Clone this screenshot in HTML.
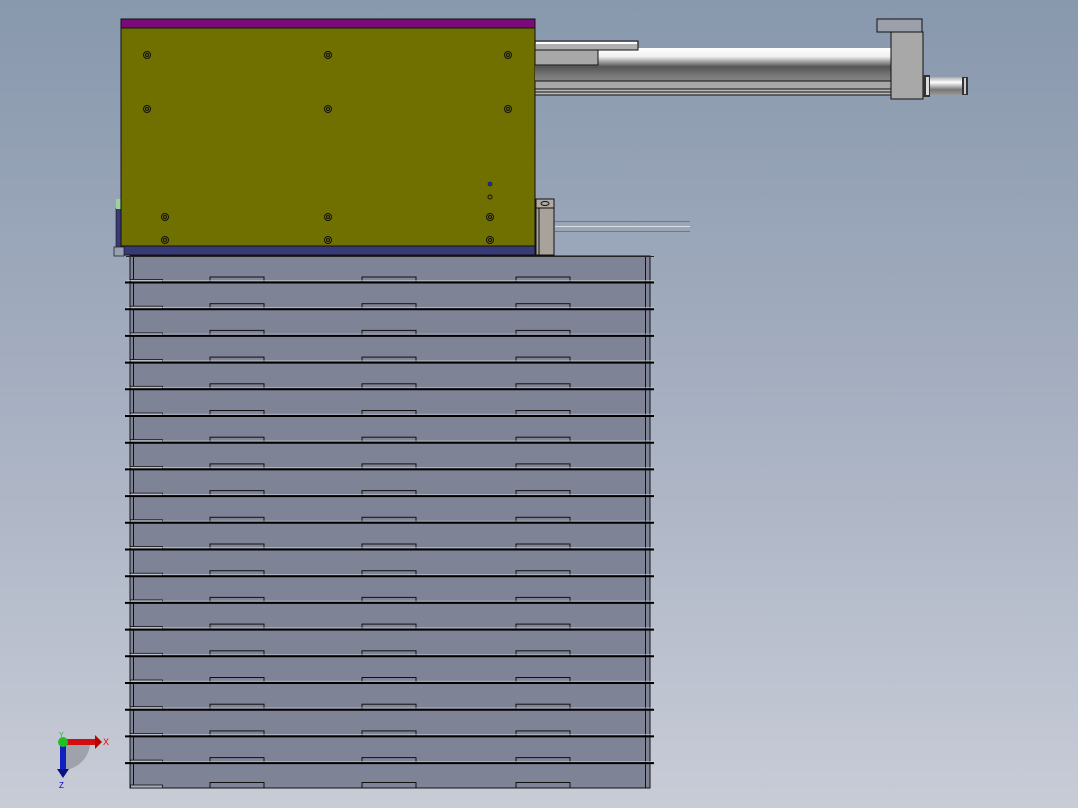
<!DOCTYPE html>
<html><head><meta charset="utf-8"><style>
html,body{margin:0;padding:0;width:1078px;height:808px;overflow:hidden}
body{background:linear-gradient(#8898ad 0%,#a3adbf 45%,#c8ccd7 100%)}
svg{position:absolute;left:0;top:0}
</style></head><body>
<svg width="1078" height="808" viewBox="0 0 1078 808">
<defs>
<linearGradient id="cyl" x1="0" y1="0" x2="0" y2="1">
<stop offset="0" stop-color="#fff"/><stop offset="0.25" stop-color="#f0f0f0"/><stop offset="0.55" stop-color="#555"/><stop offset="0.8" stop-color="#777"/><stop offset="1" stop-color="#888"/></linearGradient>
<linearGradient id="rod" x1="0" y1="0" x2="0" y2="1">
<stop offset="0" stop-color="#aaa"/><stop offset="0.3" stop-color="#fff"/><stop offset="0.7" stop-color="#777"/><stop offset="1" stop-color="#999"/></linearGradient>
</defs>
<!-- stack -->
<rect x="130" y="256" width="520" height="532" fill="#7f8396" stroke="#111" stroke-width="1"/>
<line x1="133.5" y1="256" x2="133.5" y2="788" stroke="#111"/>
<line x1="645.5" y1="256" x2="645.5" y2="788" stroke="#111"/>
<line x1="126" y1="256.5" x2="654" y2="256.5" stroke="#222"/>
<g id="shelves"></g>
<!-- box -->
<rect x="116" y="208" width="5" height="40" fill="#3a3a78" stroke="#111" stroke-width="0.6"/>
<rect x="116" y="199" width="5" height="10" fill="#9fd0a0"/>
<rect x="121" y="19" width="414" height="9" fill="#7a0a78" stroke="#111"/>
<rect x="121" y="28" width="414" height="218" fill="#707000" stroke="#111"/>
<rect x="121" y="246" width="414" height="9" fill="#383a78" stroke="#111"/>
<rect x="114" y="247" width="10" height="9" fill="#9aa0ae" stroke="#222" stroke-width="0.8"/>
<g fill="none" stroke="#111" stroke-width="1">
<circle cx="147" cy="55" r="3.5"/><circle cx="147" cy="55" r="1.5"/>
<circle cx="328" cy="55" r="3.5"/><circle cx="328" cy="55" r="1.5"/>
<circle cx="508" cy="55" r="3.5"/><circle cx="508" cy="55" r="1.5"/>
<circle cx="147" cy="109" r="3.5"/><circle cx="147" cy="109" r="1.5"/>
<circle cx="328" cy="109" r="3.5"/><circle cx="328" cy="109" r="1.5"/>
<circle cx="508" cy="109" r="3.5"/><circle cx="508" cy="109" r="1.5"/>
<circle cx="165" cy="217" r="3.5"/><circle cx="165" cy="217" r="1.5"/>
<circle cx="328" cy="217" r="3.5"/><circle cx="328" cy="217" r="1.5"/>
<circle cx="490" cy="217" r="3.5"/><circle cx="490" cy="217" r="1.5"/>
<circle cx="165" cy="240" r="3.5"/><circle cx="165" cy="240" r="1.5"/>
<circle cx="328" cy="240" r="3.5"/><circle cx="328" cy="240" r="1.5"/>
<circle cx="490" cy="240" r="3.5"/><circle cx="490" cy="240" r="1.5"/>
<circle cx="490" cy="197" r="2"/>
</g>
<circle cx="490" cy="184" r="2" fill="#2030c0" stroke="#111" stroke-width="0.6"/>
<!-- bracket -->
<rect x="536" y="199" width="18" height="56" fill="#a8a29a" stroke="#111"/>
<rect x="536" y="199" width="18" height="9" fill="#b0aca4" stroke="#111"/>
<ellipse cx="545" cy="203.5" rx="4" ry="2" fill="none" stroke="#111"/>
<line x1="539" y1="208" x2="539" y2="255" stroke="#111"/>
<g stroke="#777" stroke-width="1"><line x1="555" y1="221.5" x2="690" y2="221.5"/><line x1="555" y1="231.5" x2="690" y2="231.5"/></g>
<line x1="555" y1="226.5" x2="690" y2="226.5" stroke="#ddd"/>
<!-- cylinder -->
<rect x="535" y="48" width="356" height="34" fill="url(#cyl)"/>
<rect x="535" y="41" width="103" height="9" fill="#b0b0b0" stroke="#111"/>
<rect x="536" y="42" width="101" height="2" fill="#fff"/>
<rect x="535" y="50" width="63" height="15" fill="#a8a8a8" stroke="#111"/>
<rect x="535" y="81" width="367" height="8" fill="#a8a8a8" stroke="#111"/>
<rect x="535" y="89" width="367" height="6" fill="#b8b8b8" stroke="#111"/>
<line x1="535" y1="92" x2="902" y2="92" stroke="#111"/>
<rect x="891" y="32" width="32" height="67" fill="#a8a8a8" stroke="#111"/>
<rect x="877" y="19" width="45" height="13" fill="#9ca0aa" stroke="#111"/>
<rect x="923" y="75" width="7" height="22" fill="#333"/>
<rect x="926" y="77" width="3" height="18" fill="#ddd"/>
<rect x="930" y="77" width="33" height="18" fill="url(#rod)"/>
<rect x="962" y="77" width="6" height="18" fill="#333"/><rect x="964" y="78" width="2" height="16" fill="#ccc"/>
<!-- triad -->
<path d="M62 744 L62 770 A28 28 0 0 0 90 744 Z" fill="#8f929a" opacity="0.7"/>
<rect x="63" y="739" width="33" height="6" fill="#d01010"/><path d="M95 735 L102 742 L95 749Z" fill="#b00"/>
<rect x="60" y="744" width="6" height="26" fill="#1020c0"/><path d="M57 769 L63 778 L69 769Z" fill="#0a1480"/>
<circle cx="63" cy="742" r="5" fill="#20c020"/>
<text x="103" y="745" font-family="Liberation Sans,sans-serif" font-size="9" fill="#e00">X</text>
<text x="59" y="788" font-family="Liberation Sans,sans-serif" font-size="8" fill="#00c">Z</text>
<text x="59" y="737" font-family="Liberation Sans,sans-serif" font-size="7" fill="#0c0">Y</text>
</svg>
<script>
var g=document.getElementById('shelves'),s='';
for(var i=0;i<20;i++){var y=282.5+26.7*i;
 var ty=(i<19)?y:788;
 s+='<rect x="130.5" y="'+(ty-3)+'" width="32" height="3" fill="#a8acba" stroke="#111" stroke-width="0.8"/>';
 [210,362,516].forEach(function(x){s+='<rect x="'+x+'" y="'+(ty-5.5)+'" width="54" height="5.5" fill="none" stroke="#111" stroke-width="1"/>';});
 if(i<19){s+='<line x1="125" y1="'+y+'" x2="654" y2="'+y+'" stroke="#000" stroke-width="2"/>';
 s+='<line x1="126" y1="'+(y-1.8)+'" x2="654" y2="'+(y-1.8)+'" stroke="#c8cad4" stroke-width="0.6"/>';}
}
g.innerHTML=s;
</script>
</body></html>
